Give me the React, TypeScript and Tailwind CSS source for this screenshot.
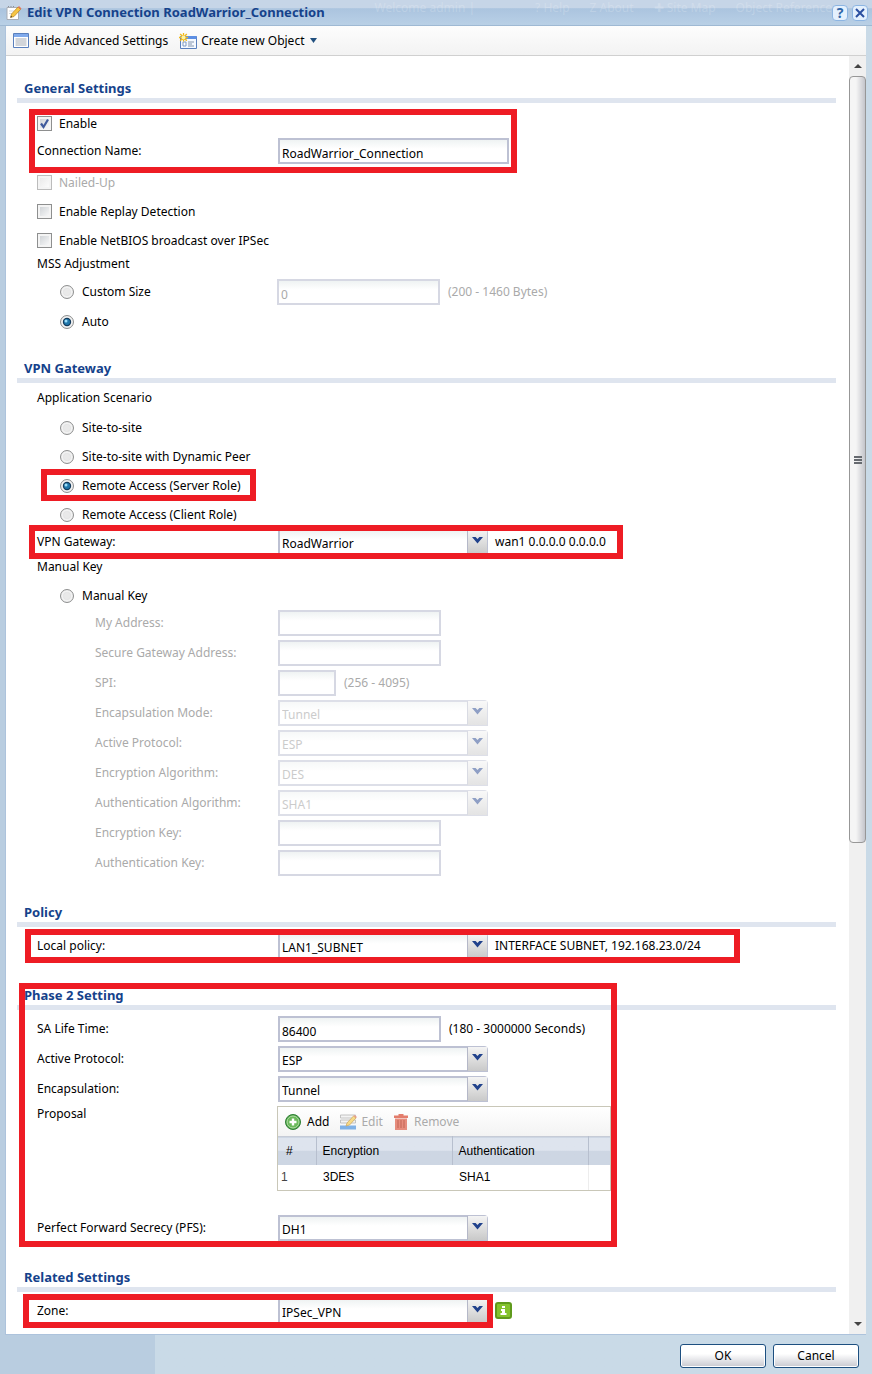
import { ReactNode, useId } from "react"

interface SelectBoxProps {
  id?: string
  label?: string
  value: string
  options: string[]
  disabled?: boolean
}

interface RadioRowProps {
  name: string
  label: string
  checked?: boolean
  className?: string
}

interface FieldRowProps {
  label: string
  children: (id: string) => ReactNode
  indent?: boolean
  className?: string
}

const scenarios = ["Site-to-site", "Site-to-site with Dynamic Peer", "Remote Access (Server Role)", "Remote Access (Client Role)"]

const cipherFields = [
  { label: "Encapsulation Mode:", value: "Tunnel", options: ["Tunnel", "Transport"] },
  { label: "Active Protocol:", value: "ESP", options: ["ESP", "AH"] },
  { label: "Encryption Algorithm:", value: "DES", options: ["DES", "3DES", "AES128"] },
  { label: "Authentication Algorithm:", value: "SHA1", options: ["SHA1", "MD5"] },
]

const inputBase =
  "h-[26px] border-2 px-[2px] pt-1 text-xs bg-linear-to-b from-[#eff3f3] to-white to-40% outline-none"
const inputOn = "border-[#bdc1d3] text-black"
const inputOff = "border-[#d6d8e3] text-[#aaaaaa]"

function Highlight({ className }: { className: string }) {
  return <div aria-hidden="true" className={`pointer-events-none absolute z-10 border-[6px] border-[#ee1c24] ${className}`} />
}

function Section({ title, children, className = "" }: { title: string; children: ReactNode; className?: string }) {
  return (
    <section className={`relative ${className}`}>
      <h2 className="h-5 pl-[7px] text-[13px] leading-5 font-bold text-[#15428b]">{title}</h2>
      <div className="h-[5px] bg-[#dfe5ef]" />
      <div className="pl-5">{children}</div>
    </section>
  )
}

function CheckRow({ label, checked, disabled }: { label: string; checked?: boolean; disabled?: boolean }) {
  return (
    <label className={`flex h-[29px] items-center gap-[7px] ${disabled ? "text-[#aaaaaa]" : ""}`}>
      <span className="relative flex">
        <input
          type="checkbox"
          defaultChecked={checked}
          disabled={disabled}
          className="peer h-[15px] w-[15px] appearance-none border border-[#8e8f8f] bg-linear-to-br from-[#c9cdd1] to-white shadow-[inset_0_0_0_2px_#f4f4f4] disabled:border-[#bcbcbc] disabled:from-[#e6e6e6]"
        />
        <svg viewBox="0 0 15 15" className="pointer-events-none absolute inset-0 hidden h-[15px] w-[15px] peer-checked:block">
          <path d="M4 7.5 6.5 11 11 3.5" fill="none" stroke="#3f5a9c" strokeWidth="2.2" />
        </svg>
      </span>
      {label}
    </label>
  )
}

function RadioRow({ name, label, checked, className = "h-[29px]" }: RadioRowProps) {
  return (
    <label className={`flex items-center gap-2 pl-[23px] ${className}`}>
      <span className="relative flex">
        <input
          type="radio"
          name={name}
          defaultChecked={checked}
          className="peer h-[14px] w-[14px] appearance-none rounded-full border border-[#8e8f8f] bg-radial from-[#e9e9e9] from-30% to-[#d2d4d6] shadow-[inset_0_0_0_2px_#f2f2f2]"
        />
        <svg viewBox="0 0 14 14" className="pointer-events-none absolute inset-0 hidden h-[14px] w-[14px] peer-checked:block">
          <circle cx="7" cy="7" r="4.2" fill="#123a5c" />
          <circle cx="7" cy="7" r="3" fill="#2077ab" />
          <circle cx="6" cy="6" r="1.5" fill="#9bdcf7" />
        </svg>
      </span>
      {label}
    </label>
  )
}

function FieldRow({ label, children, indent, className = "h-[30px]" }: FieldRowProps) {
  const id = useId()
  return (
    <div className={`flex items-center ${indent ? "pl-[58px] text-[#aaaaaa]" : ""} ${className}`}>
      <label htmlFor={id} className={indent ? "w-[183px] shrink-0" : "w-[241px] shrink-0"}>
        {label}
      </label>
      {children(id)}
    </div>
  )
}

function SelectBox({ id, value, options, disabled }: SelectBoxProps) {
  return (
    <div className={`relative h-[26px] w-[210px] shrink-0 ${disabled ? "opacity-50" : ""}`}>
      <select
        id={id}
        defaultValue={value}
        disabled={disabled}
        className={`${inputBase} w-full appearance-none rounded-tr-sm border-[#bdc1d3] pr-6 ${disabled ? "text-[#999999] opacity-100" : "text-black"}`}
      >
        {options.map((option) => (
          <option key={option}>{option}</option>
        ))}
      </select>
      <span className="pointer-events-none absolute inset-y-px right-px flex w-5 justify-center border-l border-[#b5b8c8] bg-linear-to-b from-[#f4f4f4] to-[#c9c9c9] pt-[7px]">
        <svg viewBox="0 0 11 7" className="h-[7px] w-[11px]">
          <path d="M0 0h3.6l1.9 2L7.400 0H11L5.500 6.500z" fill="#21428c" />
        </svg>
      </span>
    </div>
  )
}

function NoteEditIcon() {
  return (
    <svg viewBox="0 0 16 16" className="h-4 w-4">
      <path d="M1 2.500h11.500v12H1z" fill="#fff" stroke="#a9adb5" />
      <path d="M2.500 2v-1M5 2v-1M7.500 2v-1" stroke="#8c9099" />
      <path d="M3 6h5M3 8.500h3" stroke="#d3d6dc" />
      <path d="M4.500 12.500 5.500 9 12 2l2.500 2.500-6.500 7z" fill="#f6c544" stroke="#b98319" strokeWidth=".7" />
      <path d="m12 2 1-1 2.500 2.500-1 1z" fill="#e2745a" />
      <path d="m4.500 12.500.5-1.800 1.200 1.200z" fill="#333" />
    </svg>
  )
}

function ListIcon() {
  return (
    <svg viewBox="0 0 16 15" className="h-[15px] w-4">
      <path d="M.5.5h15v14H.500z" fill="#fff" stroke="#5a80bd" />
      <path d="M1 1h14v3H1z" fill="#80aaec" />
      <path d="M2.500 6h11M2.500 8h11M2.500 10h11M2.500 12h11" stroke="#a5abb4" strokeWidth="1" />
    </svg>
  )
}

function NewObjectIcon() {
  return (
    <svg viewBox="0 0 18 16" className="h-4 w-[18px]">
      <path d="M1.500 3.500h16v12h-16z" fill="#f5f9ff" stroke="#5a80bd" />
      <path d="M2 3h15.500v3H2z" fill="#5d8fe4" />
      <path d="M4 9h3v4H4z" fill="#fff" stroke="#7d99c4" />
      <path d="M9 9h6M9 11h4M9 13h6" stroke="#8294ad" />
      <path d="M4.500 0v8.500M0 4.500h9M1.200 1l6.600 6.800M7.800 1 1.200 7.800" stroke="#f1b81a" strokeWidth="1.300" />
      <circle cx="4.500" cy="4.500" r="2" fill="#fff3a2" />
    </svg>
  )
}

function AddIcon() {
  return (
    <svg viewBox="0 0 16 16" className="h-4 w-4">
      <circle cx="8" cy="8" r="7.500" fill="#4ba045" stroke="#2f7f35" />
      <circle cx="8" cy="8" r="6" fill="#6ab95a" stroke="#b5dfa9" />
      <path d="M8 4.500v7M4.500 8h7" stroke="#fff" strokeWidth="2.400" />
    </svg>
  )
}

function RowEditIcon() {
  return (
    <svg viewBox="0 0 17 16" className="h-4 w-[17px] opacity-70">
      <path d="M.5 1h15v3H.500zM.500 6h15v3H.500z" fill="#f2f2f2" stroke="#9b9b9b" strokeWidth=".8" />
      <path d="M0 11.500h16v4H0z" fill="#4e94e0" />
      <path d="m6 12 1-3 6.500-7L16 4l-6.500 7z" fill="#f6cd58" stroke="#b98319" strokeWidth=".7" />
      <path d="m13.500 2 1-1L17 3l-1 1z" fill="#e2745a" />
    </svg>
  )
}

function TrashIcon() {
  return (
    <svg viewBox="0 0 14 16" className="h-4 w-[14px] opacity-70">
      <path d="M0 1.500h4.500V0h5v1.500H14V4H0z" fill="#d9472f" />
      <path d="M1 4.500h12V16H1z" fill="#e0604a" />
      <path d="M4 6v8M7 6v8M10 6v8" stroke="#b5311c" strokeWidth="1.200" />
    </svg>
  )
}

function ScrollArrow({ down }: { down?: boolean }) {
  return (
    <svg viewBox="0 0 8 4" className={`h-1 w-2 ${down ? "rotate-180" : ""}`}>
      <path d="M4 0 8 4H0z" fill="#444" />
    </svg>
  )
}

function ScrollBar() {
  return (
    <div aria-hidden="true" className="flex w-[17px] shrink-0 flex-col items-center bg-[#f0f0f0]">
      <div className="flex h-5 items-center">
        <ScrollArrow />
      </div>
      <div className="flex w-full grow-[763] flex-col items-center justify-center gap-px rounded-sm border border-[#979797] bg-linear-to-r from-[#f5f5f5] from-40% to-[#c4c5cb]">
        <span className="h-[2px] w-2 bg-[#666a70]" />
        <span className="h-[2px] w-2 bg-[#666a70]" />
        <span className="h-[2px] w-2 bg-[#666a70]" />
      </div>
      <div className="grow-[474]" />
      <div className="flex h-5 items-center">
        <ScrollArrow down />
      </div>
    </div>
  )
}

function ProposalGrid() {
  return (
    <div className="w-[334px] border border-[#c9c7b8]">
      <div className="flex h-[29px] items-center gap-[11px] bg-linear-to-b from-white to-[#f3f3f3] pl-[7px]">
        <button type="button" className="flex items-center gap-[6px]">
          <AddIcon />
          Add
        </button>
        <button type="button" disabled className="flex items-center gap-1 text-[#aaaaaa]">
          <RowEditIcon />
          Edit
        </button>
        <button type="button" disabled className="flex items-center gap-[6px] text-[#aaaaaa]">
          <TrashIcon />
          Remove
        </button>
      </div>
      <table className="w-full table-fixed text-left font-['Liberation_Sans',Arial,sans-serif] text-xs">
        <thead>
          <tr className="h-[28px] border-t border-[#c6cbd6] bg-linear-to-b from-[#dee4ee] from-45% to-[#cdd6e3] to-50%">
            <th scope="col" className="w-[38px] border-r border-[#b7bfce] pl-2 font-normal">#</th>
            <th scope="col" className="w-[136px] border-r border-[#b7bfce] pl-[6px] font-normal">Encryption</th>
            <th scope="col" className="w-[136px] border-r border-[#b7bfce] pl-[6px] font-normal">Authentication</th>
            <th scope="col" aria-label="Spacer" />
          </tr>
        </thead>
        <tbody>
          <tr className="h-[25px]">
            <td className="pl-[3px] text-[#444444]">1</td>
            <td className="pl-[7px]">3DES</td>
            <td className="border-r border-[#ededed] pl-[7px]">SHA1</td>
            <td />
          </tr>
        </tbody>
      </table>
    </div>
  )
}

function TitleBar() {
  return (
    <header className="relative flex h-[26px] items-center gap-[5px] border-b border-[#9fb9d3] bg-linear-to-b from-[#c6d5e7] from-30% via-[#abc4df] via-35% to-[#b9d0e6] pr-1 pl-[6px]">
      <div aria-hidden="true" className="absolute inset-y-0 right-10 flex items-start gap-5 text-xs leading-4 whitespace-nowrap text-white/20">
        <span className="mr-10">Welcome admin |</span>
        <span>? Help</span>
        <span>Z About</span>
        <span>✚ Site Map</span>
        <span>Object Reference</span>
      </div>
      <NoteEditIcon />
      <h1 className="text-[13px] font-bold text-[#15428b]">Edit VPN Connection RoadWarrior_Connection</h1>
      <div className="relative ml-auto flex gap-1">
        <button
          type="button"
          aria-label="Help"
          className="flex h-4 w-4 items-center justify-center rounded-sm border border-[#8db5e2] bg-[#e4f0fd] text-sm leading-4 font-bold text-[#2f66a8]"
        >
          ?
        </button>
        <button
          type="button"
          aria-label="Close"
          className="flex h-4 w-4 items-center justify-center rounded-sm border border-[#8db5e2] bg-[#e4f0fd]"
        >
          <svg viewBox="0 0 10 10" className="h-[10px] w-[10px]">
            <path d="m1 1 8 8M9 1 1 9" stroke="#2b4fa0" strokeWidth="2" />
          </svg>
        </button>
      </div>
    </header>
  )
}

export default function App() {
  return (
    <form
      onSubmit={(e) => e.preventDefault()}
      className="bg-linear-to-r from-[#b9cde0] from-[155px] to-[#c9dae7] to-[155px] font-['Noto_Sans','Open_Sans',sans-serif] text-xs text-black"
    >
      <TitleBar />
      <div className="mr-[6px] ml-[5px] border-b border-l border-[#adc3dc] bg-white">
        <div className="flex h-[30px] items-center gap-[11px] border-b border-[#d0d0d0] bg-linear-to-b from-[#fdfdfd] to-[#f3f3f3] pl-[7px]">
          <button type="button" className="flex items-center gap-[6px]">
            <ListIcon />
            Hide Advanced Settings
          </button>
          <button type="button" className="flex items-center gap-1">
            <NewObjectIcon />
            Create new Object
            <svg viewBox="0 0 7 5" className="ml-[2px] h-[5px] w-[7px]">
              <path d="M0 0h7L3.500 5z" fill="#21507f" />
            </svg>
          </button>
        </div>

        <div className="flex">
          <div className="min-w-0 flex-1 pt-[22px] pr-[13px] pb-2 pl-[11px]">
            <Section title="General Settings">
              <div className="relative pt-[6px]">
                <CheckRow label="Enable" checked />
                <FieldRow label="Connection Name:" className="h-[26px]">
                  {(id) => <input id={id} type="text" defaultValue="RoadWarrior_Connection" className={`${inputBase} ${inputOn} w-[231px]`} />}
                </FieldRow>
                <Highlight className="top-[6px] -bottom-[9px] -left-2 w-[488px]" />
              </div>
              <div className="pt-1">
                <CheckRow label="Nailed-Up" disabled />
                <CheckRow label="Enable Replay Detection" />
                <CheckRow label="Enable NetBIOS broadcast over IPSec" />
              </div>
              <fieldset>
                <legend className="h-[22px] leading-[18px]">MSS Adjustment</legend>
                <div className="flex h-[30px] items-center">
                  <RadioRow name="mss" label="Custom Size" className="w-[240px]" />
                  <input type="text" aria-label="Custom size" disabled defaultValue="0" className={`${inputBase} ${inputOff} w-[163px]`} />
                  <span className="ml-2 text-[#aaaaaa]">(200 - 1460 Bytes)</span>
                </div>
                <RadioRow name="mss" label="Auto" checked className="h-[30px]" />
              </fieldset>
            </Section>

            <Section title="VPN Gateway" className="mt-[21px]">
              <fieldset>
                <legend className="h-[30px] leading-[30px]">Application Scenario</legend>
                {scenarios.map((scenario) => (
                  <div key={scenario} className="relative">
                    <RadioRow name="scenario" label={scenario} checked={scenario.includes("Server")} />
                    {scenario.includes("Server") && <Highlight className="-top-[2px] left-1 h-8 w-[215px]" />}
                  </div>
                ))}
              </fieldset>
              <div className="relative">
                <FieldRow label="VPN Gateway:" className="h-[26px]">
                  {(id) => (
                    <>
                      <SelectBox id={id} value="RoadWarrior" options={["RoadWarrior"]} />
                      <span className="ml-[7px]">wan1 0.0.0.0 0.0.0.0</span>
                    </>
                  )}
                </FieldRow>
                <Highlight className="-inset-y-[4px] -left-2 w-[594px]" />
              </div>
              <fieldset>
                <legend className="h-7 leading-6">Manual Key</legend>
                <RadioRow name="scenario" label="Manual Key" className="h-[25px]" />
                <FieldRow indent label="My Address:">
                  {(id) => <input id={id} type="text" disabled className={`${inputBase} ${inputOff} w-[163px]`} />}
                </FieldRow>
                <FieldRow indent label="Secure Gateway Address:">
                  {(id) => <input id={id} type="text" disabled className={`${inputBase} ${inputOff} w-[163px]`} />}
                </FieldRow>
                <FieldRow indent label="SPI:">
                  {(id) => (
                    <>
                      <input id={id} type="text" disabled className={`${inputBase} ${inputOff} w-[58px]`} />
                      <span className="ml-2">(256 - 4095)</span>
                    </>
                  )}
                </FieldRow>
                {cipherFields.map((field) => (
                  <FieldRow key={field.label} indent label={field.label}>
                    {(id) => <SelectBox id={id} value={field.value} options={field.options} disabled />}
                  </FieldRow>
                ))}
                <FieldRow indent label="Encryption Key:">
                  {(id) => <input id={id} type="text" disabled className={`${inputBase} ${inputOff} w-[163px]`} />}
                </FieldRow>
                <FieldRow indent label="Authentication Key:">
                  {(id) => <input id={id} type="text" disabled className={`${inputBase} ${inputOff} w-[163px]`} />}
                </FieldRow>
              </fieldset>
            </Section>

            <Section title="Policy" className="mt-6">
              <div className="relative pt-1">
                <FieldRow label="Local policy:">
                  {(id) => (
                    <>
                      <SelectBox id={id} value="LAN1_SUBNET" options={["LAN1_SUBNET", "LAN2_SUBNET"]} />
                      <span className="ml-[7px]">INTERFACE SUBNET, 192.168.23.0/24</span>
                    </>
                  )}
                </FieldRow>
                <Highlight className="top-[2px] bottom-[-2px] -left-3 w-[715px]" />
              </div>
            </Section>

            <Section title="Phase 2 Setting" className="mt-6">
              <div className="pt-1">
                <FieldRow label="SA Life Time:">
                  {(id) => (
                    <>
                      <input id={id} type="text" defaultValue="86400" className={`${inputBase} ${inputOn} w-[163px]`} />
                      <span className="ml-2">(180 - 3000000 Seconds)</span>
                    </>
                  )}
                </FieldRow>
                <FieldRow label="Active Protocol:">
                  {(id) => <SelectBox id={id} value="ESP" options={["ESP", "AH"]} />}
                </FieldRow>
                <FieldRow label="Encapsulation:">
                  {(id) => <SelectBox id={id} value="Tunnel" options={["Tunnel", "Transport"]} />}
                </FieldRow>
                <div className="flex pt-[2px] pb-[22px]">
                  <span className="w-[240px] shrink-0">Proposal</span>
                  <ProposalGrid />
                </div>
                <FieldRow label="Perfect Forward Secrecy (PFS):">
                  {(id) => <SelectBox id={id} value="DH1" options={["none", "DH1", "DH2", "DH5"]} />}
                </FieldRow>
              </div>
              <Highlight className="-top-[2px] -bottom-1 left-[2px] w-[598px]" />
            </Section>

            <Section title="Related Settings" className="mt-6">
              <div className="relative pt-1">
                <FieldRow label="Zone:">
                  {(id) => (
                    <>
                      <SelectBox id={id} value="IPSec_VPN" options={["IPSec_VPN"]} />
                      <button
                        type="button"
                        aria-label="Zone information"
                        className="ml-[7px] flex h-[17px] w-[17px] items-center justify-center rounded-[3px] border-2 border-[#5f9a1c] bg-[#84c22d]"
                      >
                        <svg viewBox="0 0 7 9" className="h-[9px] w-[7px]">
                          <path d="M2 0h3v2H2zM1 3h4v4h1.500v2h-6V7H2V5H1z" fill="#fff" />
                        </svg>
                      </button>
                    </>
                  )}
                </FieldRow>
                <Highlight className="top-[2px] bottom-[-2px] -left-[14px] w-[470px]" />
              </div>
            </Section>
          </div>
          <ScrollBar />
        </div>
      </div>

      <footer className="flex justify-end gap-[7px] px-[13px] pt-[9px] pb-[6px]">
        <button type="submit" className="h-6 w-[86px] rounded-[3px] border border-[#1d4f80] bg-linear-to-b from-white from-40% to-[#c8c9d0] shadow-[inset_0_0_0_1px_#fff]">
          OK
        </button>
        <button type="button" className="h-6 w-[86px] rounded-[3px] border border-[#1d4f80] bg-linear-to-b from-white from-40% to-[#c8c9d0] shadow-[inset_0_0_0_1px_#fff]">
          Cancel
        </button>
      </footer>
    </form>
  )
}
